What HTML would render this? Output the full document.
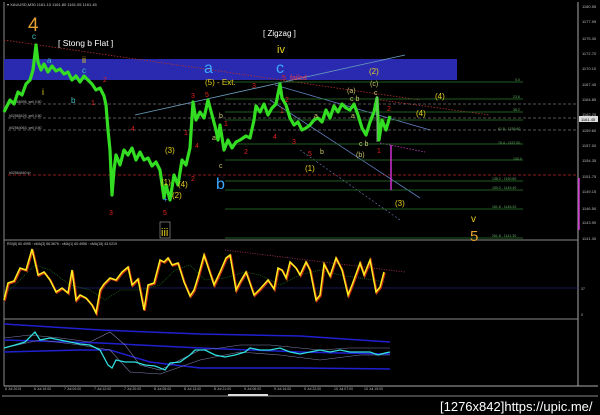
<!DOCTYPE html>
<html><head><meta charset="utf-8"><style>
html,body{margin:0;padding:0;background:#000;width:600px;height:415px;overflow:hidden}
svg{display:block}
text{font-family:"Liberation Sans",sans-serif}
</style></head><body>
<svg width="600" height="415" viewBox="0 0 600 415" xmlns="http://www.w3.org/2000/svg">
<rect width="600" height="415" fill="#000"/>
<line x1="4" y1="2" x2="4" y2="386" stroke="#888" stroke-width="1"/>
<line x1="578" y1="2" x2="578" y2="386" stroke="#aaa" stroke-width="1"/>
<line x1="4" y1="240" x2="578" y2="240" stroke="#888"/>
<line x1="4" y1="319" x2="578" y2="319" stroke="#888"/>
<line x1="4" y1="386" x2="598" y2="386" stroke="#aaa"/>
<line x1="2" y1="396" x2="598" y2="396" stroke="#888"/>
<text x="7" y="6" font-size="4" fill="#ccc">▾ XAUUSD,M30  1161.10 1161.80 1161.05 1161.45</text>
<rect x="4" y="59" width="453" height="21" fill="#2a2ab0"/>
<line x1="4" y1="40" x2="420" y2="100" stroke="#b03030" stroke-dasharray="1.5,1.5" stroke-width="0.8"/>
<line x1="380" y1="100" x2="490" y2="115" stroke="#b03030" stroke-dasharray="1.5,1.5" stroke-width="0.8"/>
<line x1="135" y1="115" x2="405" y2="55" stroke="#6aa0c0" stroke-width="0.8"/>
<line x1="275" y1="85" x2="430" y2="130" stroke="#6080c0" stroke-width="0.8"/>
<line x1="270" y1="100" x2="420" y2="198" stroke="#6080c0" stroke-width="0.8"/>
<line x1="300" y1="150" x2="400" y2="220" stroke="#6070a0" stroke-width="0.7" stroke-dasharray="2,2"/>
<line x1="380" y1="143" x2="425" y2="152" stroke="#c040c0" stroke-dasharray="1.5,1.5" stroke-width="0.8"/>
<g stroke="#aaa" stroke-width="0.6" stroke-dasharray="3,2">
<line x1="8" y1="104" x2="578" y2="104"/>
<line x1="8" y1="118" x2="578" y2="118"/>
<line x1="8" y1="130" x2="578" y2="130"/>
</g>
<line x1="8" y1="175" x2="578" y2="175" stroke="#c02020" stroke-width="0.7" stroke-dasharray="3,2"/>
<g stroke="#2a7a2a" stroke-width="0.7">
<line x1="225" y1="82" x2="523" y2="82"/>
<line x1="225" y1="99" x2="523" y2="99"/>
<line x1="225" y1="112" x2="523" y2="112"/>
<line x1="225" y1="120" x2="523" y2="120"/>
<line x1="225" y1="144" x2="523" y2="144"/>
<line x1="225" y1="160" x2="523" y2="160"/>
<line x1="225" y1="181" x2="523" y2="181"/>
<line x1="225" y1="190" x2="523" y2="190"/>
<line x1="225" y1="209" x2="523" y2="209"/>
<line x1="225" y1="238" x2="523" y2="238"/>
</g>
<g font-size="3.5" fill="#bbb">
<text x="9" y="103">#02566995_sell 0,50</text>
<text x="9" y="117">#02565425_sell 0,50</text>
<text x="9" y="129">#02564063_sell 0,50</text>
<text x="9" y="174">#02564460 tp</text>
</g>
<g font-size="3.5" fill="#6a6">
<text x="515" y="81">0.0</text><text x="513" y="98">23.6</text><text x="513" y="111">38.2</text>
<text x="498" y="130">61.8 - 1159.60</text><text x="498" y="144">76.4 - 1157.00</text><text x="513" y="160">100.0</text>
<text x="492" y="180">138.2 - 1150.80</text><text x="492" y="189">150.0 - 1149.40</text><text x="492" y="208">161.8 - 1146.20</text><text x="492" y="237">261.8 - 1141.30</text>
</g>
<polyline fill="none" stroke="#33dd22" stroke-width="3.2" stroke-linejoin="round" points="4,112 10,100 14,104 18,92 22,95 26,84 30,80 33,70 36,45 38,62 41,70 44,64 48,72 52,66 56,71 60,69 64,74 68,72 72,80 76,76 80,82 84,76 88,80 92,84 96,90 100,88 104,96 106,105 108,130 110,150 112,195 114,170 116,155 120,165 124,150 128,155 132,148 136,160 140,152 144,160 148,158 152,166 156,162 160,170 164,198 166,185 170,200 174,175 178,185 182,160 186,165 190,148 193,102 196,120 200,112 204,118 208,100 212,115 216,130 218,140 220,125 224,150 228,140 232,148 236,142 240,140 246,136 250,138 254,120 256,106 260,112 264,104 268,115 272,108 276,104 280,84 282,98 286,105 290,118 294,125 298,122 302,130 306,128 310,125 314,120 318,118 322,122 326,110 330,118 334,106 338,112 342,104 346,108 350,110 354,104 358,115 362,128 366,135 370,122 374,112 377,98 379,140 382,120 386,130 390,116"/>
<line x1="377" y1="96" x2="377" y2="142" stroke="#aaa" stroke-width="0.8"/>
<line x1="391" y1="145" x2="391" y2="190" stroke="#d030d0" stroke-width="1.5"/>
<line x1="579" y1="178" x2="579" y2="230" stroke="#d030d0" stroke-width="1.5"/>
<g>
<text x="28" y="31" font-size="19" fill="#e8a030">4</text>
<text x="32" y="39" font-size="8" fill="#40c0c0">c</text>
<text x="58" y="46" font-size="8.5" fill="#fff">[ Stong b Flat ]</text>
<text x="82" y="63" font-size="9" fill="#e8d020">ii</text>
<text x="82" y="73" font-size="8" fill="#40c0c0">c</text>
<text x="47" y="63" font-size="8" fill="#40c0c0">a</text>
<text x="42" y="95" font-size="9" fill="#e8d020">i</text>
<text x="71" y="103" font-size="8" fill="#40c0c0">b</text>
<text x="91" y="105" font-size="7" fill="#e02020">1</text>
<text x="103" y="82" font-size="7" fill="#e02020">2</text>
<text x="131" y="131" font-size="7" fill="#e02020">4</text>
<text x="109" y="215" font-size="7" fill="#e02020">3</text>
<text x="165" y="153" font-size="8" fill="#e8d020">(3)</text>
<text x="161" y="185" font-size="8" fill="#e8d020">(1)</text>
<text x="178" y="187" font-size="8" fill="#e8d020">(4)</text>
<text x="172" y="198" font-size="8" fill="#e8d020">(2)</text>
<text x="163" y="215" font-size="7" fill="#e02020">5</text>
<text x="163" y="202" font-size="8" fill="#40a0ff">+</text>
<rect x="160" y="222" width="10" height="16" fill="none" stroke="#aaa" stroke-width="0.6"/>
<text x="161" y="236" font-size="11" fill="#e8d020">iii</text>
<text x="184" y="135" font-size="7" fill="#e02020">1</text>
<text x="195" y="148" font-size="7" fill="#e02020">4</text>
<text x="191" y="181" font-size="7" fill="#e02020">2</text>
<text x="191" y="98" font-size="7" fill="#e02020">3</text>
<text x="205" y="97" font-size="7" fill="#e02020">5</text>
<text x="204" y="73" font-size="16" fill="#3aa8ff">a</text>
<text x="205" y="85" font-size="8" fill="#e8d020">(5) - Ext.</text>
<text x="219" y="118" font-size="7" fill="#c8c870">b</text>
<text x="224" y="126" font-size="7" fill="#e02020">1</text>
<text x="212" y="140" font-size="7" fill="#c8c870">a</text>
<text x="219" y="168" font-size="7" fill="#c8c870">c</text>
<text x="216" y="189" font-size="16" fill="#3aa8ff">b</text>
<text x="244" y="154" font-size="7" fill="#e02020">2</text>
<text x="252" y="88" font-size="7" fill="#e02020">3</text>
<text x="273" y="139" font-size="7" fill="#e02020">4</text>
<text x="292" y="144" font-size="7" fill="#e02020">3</text>
<text x="263" y="36" font-size="8" fill="#fff">[ Zigzag ]</text>
<text x="277" y="53" font-size="11" fill="#e8d020">iv</text>
<text x="276" y="73" font-size="16" fill="#3aa8ff">c</text>
<text x="282" y="80" font-size="7" fill="#e02020">5</text>
<text x="290" y="80" font-size="7" fill="#e04050">failed</text>
<text x="285" y="102" font-size="7" fill="#e02020">2</text>
<text x="280" y="113" font-size="7" fill="#e02020">1</text>
<text x="369" y="74" font-size="8" fill="#e8d020">(2)</text>
<text x="370" y="86" font-size="7" fill="#c8c870">(c)</text>
<text x="374" y="95" font-size="7" fill="#c8c870">c</text>
<text x="347" y="93" font-size="7" fill="#c8c870">(a)</text>
<text x="350" y="101" font-size="7" fill="#c8c870">c b</text>
<text x="314" y="118" font-size="7" fill="#c8c870">a</text>
<text x="351" y="118" font-size="7" fill="#c8c870">a</text>
<text x="387" y="111" font-size="7" fill="#e02020">2</text>
<text x="435" y="99" font-size="8" fill="#e8d020">(4)</text>
<text x="416" y="116" font-size="8" fill="#e8d020">(4)</text>
<text x="359" y="146" font-size="7" fill="#c8c870">c b</text>
<text x="356" y="157" font-size="7" fill="#c8c870">(b)</text>
<text x="377" y="153" font-size="7" fill="#e02020">1</text>
<text x="308" y="156" font-size="7" fill="#e02020">5</text>
<text x="320" y="154" font-size="7" fill="#c8c870">b</text>
<text x="305" y="171" font-size="8" fill="#e8d020">(1)</text>
<text x="395" y="206" font-size="8" fill="#e8d020">(3)</text>
<text x="471" y="222" font-size="10" fill="#e8d020">v</text>
<text x="470" y="241" font-size="15" fill="#e8a030">5</text>
</g>
<g font-size="4" fill="#bbb">
<text x="582" y="8">1180.55</text><text x="582" y="23">1177.95</text><text x="582" y="40">1175.30</text>
<text x="582" y="55">1172.70</text><text x="582" y="70">1170.10</text><text x="582" y="86">1167.45</text>
<text x="582" y="101">1164.85</text><text x="582" y="116">1162.25</text><text x="582" y="132">1159.60</text>
<text x="582" y="147">1157.00</text><text x="582" y="162">1154.35</text><text x="582" y="178">1151.75</text>
<text x="582" y="193">1149.15</text><text x="582" y="210">1146.50</text><text x="582" y="224">1143.90</text>
<text x="582" y="240">1141.30</text>
</g>
<rect x="579" y="116" width="19" height="6" fill="#ddd"/>
<text x="581" y="121" font-size="4" fill="#000">1161.45</text>
<text x="7" y="245" font-size="3.5" fill="#ccc">RSI(8) 60.4995  ◦ xMA(3) 56.3676  ◦ xMA(1) 60.4956  ◦ xMA(15) 43.0219</text>
<line x1="4" y1="288" x2="578" y2="288" stroke="#22227a" stroke-width="0.7"/>
<line x1="225" y1="250" x2="405" y2="272" stroke="#b03060" stroke-dasharray="1,1.5" stroke-width="0.8"/>
<polyline fill="none" stroke="#207020" stroke-width="0.7" stroke-dasharray="1,1" points="4,295 20,280 35,265 50,270 70,285 90,290 105,300 120,290 140,290 160,285 175,270 190,265 205,280 225,278 245,272 260,275 280,285 300,275 320,270 340,275 360,278 385,282"/>
<polyline fill="none" stroke="#c03010" stroke-width="2" transform="translate(0.8,0.8)" points="4,300 8,283 14,281 20,268 26,270 32,249 38,275 44,272 50,280 56,292 62,288 68,293 72,270 76,300 80,295 86,298 92,305 96,313 100,290 104,284 110,278 116,280 122,272 128,267 132,285 138,279 144,310 148,285 154,283 160,260 164,262 168,258 172,265 178,263 184,282 190,296 194,290 198,277 204,255 210,273 214,285 220,272 226,258 230,255 236,290 240,282 246,272 254,295 260,289 268,280 274,289 278,268 282,270 286,278 290,262 296,268 300,275 306,262 310,270 316,300 320,295 324,264 330,276 336,258 342,270 348,295 352,285 360,263 364,275 370,260 376,292 380,287 384,272"/>
<polyline fill="none" stroke="#ffee20" stroke-width="1.5" points="4,300 8,283 14,281 20,268 26,270 32,249 38,275 44,272 50,280 56,292 62,288 68,293 72,270 76,300 80,295 86,298 92,305 96,313 100,290 104,284 110,278 116,280 122,272 128,267 132,285 138,279 144,310 148,285 154,283 160,260 164,262 168,258 172,265 178,263 184,282 190,296 194,290 198,277 204,255 210,273 214,285 220,272 226,258 230,255 236,290 240,282 246,272 254,295 260,289 268,280 274,289 278,268 282,270 286,278 290,262 296,268 300,275 306,262 310,270 316,300 320,295 324,264 330,276 336,258 342,270 348,295 352,285 360,263 364,275 370,260 376,292 380,287 384,272"/>
<text x="581" y="290" font-size="3.5" fill="#bbb">37</text>
<text x="581" y="316" font-size="3.5" fill="#bbb">0</text>
<polyline fill="none" stroke="#2020d0" stroke-width="1.5" points="4,324 100,330 200,334 300,336 390,342"/>
<polyline fill="none" stroke="#2020d0" stroke-width="1.5" points="4,340 100,343 200,348 300,352 390,354"/>
<polyline fill="none" stroke="#2020d0" stroke-width="1.5" points="4,352 80,350 110,350 150,362 200,368 300,368 390,369"/>
<polyline fill="none" stroke="#8080b0" stroke-width="0.6" points="4,338 30,335 60,338 90,342 110,332 125,345 140,365 160,370 180,360 200,350 220,348 240,345 270,345 300,348 320,350 350,348 390,348"/>
<polyline fill="none" stroke="#8080b0" stroke-width="0.6" points="4,348 40,340 80,345 110,350 130,372 160,374 200,360 240,352 280,355 320,360 360,355 390,355"/>
<polyline fill="none" stroke="#30e0e0" stroke-width="1.3" points="4,348 15,345 25,342 35,332 40,340 50,338 60,340 70,342 80,344 90,345 100,350 108,365 112,368 116,360 125,362 135,362 145,365 155,366 165,370 170,363 180,362 190,355 195,350 205,350 215,355 225,357 235,355 245,352 250,348 260,350 270,350 280,348 290,352 300,354 310,352 320,350 330,352 340,350 350,352 360,352 370,352 378,355 385,353 390,352"/>
<g font-size="3.5" fill="#bbb">
<text x="5" y="390">6 Jul 2015</text><text x="34" y="390">6 Jul 19:00</text><text x="64" y="390">7 Jul 04:00</text>
<text x="94" y="390">7 Jul 12:00</text><text x="124" y="390">7 Jul 20:00</text><text x="154" y="390">8 Jul 05:00</text>
<text x="184" y="390">8 Jul 13:00</text><text x="214" y="390">8 Jul 21:00</text><text x="244" y="390">9 Jul 06:00</text>
<text x="274" y="390">9 Jul 14:00</text><text x="304" y="390">9 Jul 22:00</text><text x="334" y="390">10 Jul 07:00</text>
<text x="364" y="390">10 Jul 15:00</text>
</g>
<rect x="228" y="394" width="40" height="2" fill="#ddd"/>
<text x="440" y="411" font-size="13" fill="#fff">[1276x842]https://upic.me/</text>
</svg>
</body></html>
